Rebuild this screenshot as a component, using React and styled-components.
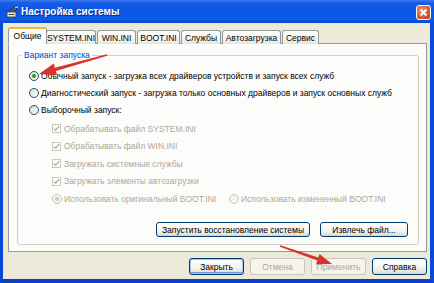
import styled, { createGlobalStyle } from "styled-components";

const GlobalStyle = createGlobalStyle`
  html, body { margin: 0; padding: 0; background: #ece9d8; }
  body { font-family: "Liberation Sans", Arial, sans-serif; }
  * { box-sizing: border-box; }
`;

const Frame = styled.div`
  position: relative;
  width: 434px;
  height: 283px;
  display: flex;
  flex-direction: column;
  overflow: hidden;
`;

const TitleBar = styled.div`
  height: 23px;
  display: flex;
  align-items: center;
  padding: 0 3px 0 6px;
  background: linear-gradient(
    to bottom,
    #3d7bf0 0%,
    #165ee6 12%,
    #0a55e4 45%,
    #0b5ae8 85%,
    #0848cc 100%
  );
`;

const TitleText = styled.span`
  flex: 1;
  margin-left: 2px;
  color: #fff;
  font-weight: bold;
  font-size: 10px;
  text-shadow: 1px 1px 0 #0a2a8a;
`;

const CloseButton = styled.div`
  width: 15px;
  height: 15px;
  border: 1px solid #fff;
  border-radius: 3px;
  background: radial-gradient(circle at 35% 30%, #f0906a, #d64f26 70%, #b8391a);
  display: flex;
  align-items: center;
  justify-content: center;
  margin-top: 2px;
`;

const Client = styled.div`
  flex: 1;
  display: flex;
  flex-direction: column;
  background: #ece9d8;
  border-left: 3px solid #0a4ad8;
  border-right: 4px solid #0a4ad8;
  border-bottom: 4px solid #0a3fc6;
  padding: 4px 3px 0 5px;
`;

const Tabs = styled.div`
  display: flex;
  align-items: flex-end;
  height: 17px;
  position: relative;
  z-index: 1;
  margin-bottom: -1px;
`;

const Tab = styled.div`
  width: ${(p) => p.$w}px;
  height: ${(p) => (p.$active ? "17px" : "14px")};
  margin-right: ${(p) => (p.$active ? "-1px" : "1px")};
  display: flex;
  align-items: center;
  justify-content: center;
  font-size: 8.5px;
  color: #000;
  border: 1px solid #919b9c;
  border-bottom: ${(p) => (p.$active ? "1px solid #fcfcfe" : "none")};
  border-top: ${(p) => (p.$active ? "2px solid #f7b43a" : "1px solid #919b9c")};
  border-radius: 3px 3px 0 0;
  background: ${(p) =>
    p.$active ? "#fcfcfe" : "linear-gradient(to bottom, #ffffff, #f3f2ec 70%, #e6e4da)"};
  white-space: nowrap;
  overflow: hidden;
`;

const Panel = styled.div`
  height: 209px;
  display: flex;
  flex-direction: column;
  border: 1px solid #919b9c;
  background: #fcfcfb;
  padding: 5px 7px 6px 8px;
`;

const Group = styled.div`
  flex: 1;
  margin-top: 6px;
  border: 1px solid #d0d0bf;
  border-radius: 3px;
  padding: 0 10px 7px 11px;
  display: flex;
  flex-direction: column;
`;

const Legend = styled.span`
  align-self: flex-start;
  margin: -6px 0 0 -7px;
  padding: 0 2px;
  background: #fcfcfb;
  color: #0046d5;
  font-size: 8.5px;
  line-height: 11px;
`;

const Row = styled.div`
  display: flex;
  align-items: center;
  height: ${(p) => (p.$tall ? "17.5px" : "17px")};
  padding-left: ${(p) => (p.$indent ? "23px" : "0")};
  font-size: 8.5px;
  color: ${(p) => (p.$disabled ? "#aca899" : "#000")};
  white-space: nowrap;
`;

const MainOptions = styled.div`
  display: flex;
  flex-direction: column;
  padding-top: 6px;
`;

const SubOptions = styled.div`
  display: flex;
  flex-direction: column;
  margin-top: 2px;
`;

const BootRow = styled.div`
  display: grid;
  grid-template-columns: 177px 1fr;
  align-items: center;
  height: 17.5px;
  padding-left: 23px;
  font-size: 8.5px;
  color: #aca899;
  white-space: nowrap;
`;

const Option = styled.span`
  display: flex;
  align-items: center;
`;

const RadioDot = styled.span`
  width: 10px;
  height: 10px;
  border-radius: 50%;
  margin-right: 2px;
  flex: none;
  border: 1px solid ${(p) => (p.$disabled ? "#cac8bb" : "#1c5180")};
  background: ${(p) =>
    p.$disabled ? "#f5f4ea" : "linear-gradient(135deg, #dcd9cf, #ffffff)"};
  display: flex;
  align-items: center;
  justify-content: center;
  &::after {
    content: "";
    display: ${(p) => (p.$checked ? "block" : "none")};
    width: 4px;
    height: 4px;
    border-radius: 50%;
    background: ${(p) => (p.$disabled ? "#cac8bb" : "#21a121")};
  }
`;

const CheckBox = styled.span`
  width: 9px;
  height: 9px;
  margin-right: 3px;
  flex: none;
  border: 1px solid #cac8bb;
  background: #fff;
  display: flex;
  align-items: center;
  justify-content: center;
`;

const ButtonRow = styled.div`
  display: flex;
  justify-content: flex-end;
  gap: 10px;
  margin-top: auto;
`;

const Button = styled.div`
  width: ${(p) => p.$w}px;
  height: ${(p) => (p.$h ? p.$h : 15)}px;
  display: flex;
  align-items: center;
  justify-content: center;
  font-size: 8.5px;
  white-space: nowrap;
  border-radius: 3px;
  border: 1px solid ${(p) => (p.$disabled ? "#c9c7ba" : "#003c74")};
  color: ${(p) => (p.$disabled ? "#aca899" : "#000")};
  background: ${(p) =>
    p.$disabled
      ? "#f5f4ea"
      : "linear-gradient(to bottom, #ffffff, #f4f3ee 60%, #e3e0d5 90%, #d6d0c5)"};
  box-shadow: ${(p) =>
    p.$default ? "inset 0 0 0 1px #a8c4ef, inset 0 -1px 0 1px #6f97e0" : "none"};
`;

const Footer = styled.div`
  display: flex;
  justify-content: flex-end;
  gap: 6px;
  padding-top: 6px;
`;

const Overlay = styled.svg`
  position: absolute;
  left: 0;
  top: 0;
  pointer-events: none;
`;

const Check = () => (
  <svg width="7" height="7" viewBox="0 0 7 7">
    <path d="M0.8 3.4 L2.7 5.3 L6.2 1.2" fill="none" stroke="#b6b4a6" strokeWidth="1.4" />
  </svg>
);

const TitleIcon = () => (
  <svg width="13" height="12" viewBox="0 0 13 12">
    <rect x="1" y="6" width="9" height="5" fill="#e8e8e8" stroke="#333" strokeWidth="0.8" />
    <path d="M3 6 L7 1.5 L11 3 L8 6" fill="#555" stroke="#222" strokeWidth="0.6" />
    <path d="M9 2 L12 0.8" stroke="#fff" strokeWidth="1" />
    <rect x="2.5" y="8" width="6" height="1" fill="#444" />
  </svg>
);

const tabs = [
  { label: "Общие", w: 39 },
  { label: "SYSTEM.INI", w: 50 },
  { label: "WIN.INI", w: 39 },
  { label: "BOOT.INI", w: 43 },
  { label: "Службы", w: 40 },
  { label: "Автозагрузка", w: 59 },
  { label: "Сервис", w: 37 },
];

const subChecks = [
  "Обрабатывать файл SYSTEM.INI",
  "Обрабатывать файл WIN.INI",
  "Загружать системные службы",
  "Загружать элементы автозагрузки",
];

export default function App() {
  return (
    <>
      <GlobalStyle />
      <Frame>
        <TitleBar>
          <TitleIcon />
          <TitleText>Настройка системы</TitleText>
          <CloseButton>
            <svg width="9" height="9" viewBox="0 0 9 9">
              <path d="M1.5 1.5 L7.5 7.5 M7.5 1.5 L1.5 7.5" stroke="#fff" strokeWidth="1.8" />
            </svg>
          </CloseButton>
        </TitleBar>
        <Client>
          <Tabs>
            {tabs.map((t, i) => (
              <Tab key={t.label} $w={t.w} $active={i === 0}>
                {t.label}
              </Tab>
            ))}
          </Tabs>
          <Panel>
            <Group>
              <Legend>Вариант запуска</Legend>
              <MainOptions>
                <Row>
                  <RadioDot $checked />
                  Обычный запуск - загрузка всех драйверов устройств и запуск всех служб
                </Row>
                <Row>
                  <RadioDot />
                  Диагностический запуск - загрузка только основных драйверов и запуск основных служб
                </Row>
                <Row>
                  <RadioDot />
                  Выборочный запуск:
                </Row>
              </MainOptions>
              <SubOptions>
                {subChecks.map((c) => (
                  <Row key={c} $indent $tall $disabled>
                    <CheckBox>
                      <Check />
                    </CheckBox>
                    {c}
                  </Row>
                ))}
                <BootRow>
                  <Option>
                    <RadioDot $checked $disabled />
                    Использовать оригинальный BOOT.INI
                  </Option>
                  <Option>
                    <RadioDot $disabled />
                    Использовать измененный BOOT.INI
                  </Option>
                </BootRow>
              </SubOptions>
              <ButtonRow>
                <Button $w={154}>Запустить восстановление системы</Button>
                <Button $w={88}>Извлечь файл...</Button>
              </ButtonRow>
            </Group>
          </Panel>
          <Footer>
            <Button $w={55} $h={17} $default>
              Закрыть
            </Button>
            <Button $w={55} $h={17} $disabled>
              Отмена
            </Button>
            <Button $w={55} $h={17} $disabled>
              Применить
            </Button>
            <Button $w={55} $h={17}>
              Справка
            </Button>
          </Footer>
        </Client>
        <Overlay width="434" height="283" viewBox="0 0 434 283">
          <polygon
            points="106.8,54.3 54.9,67.7 53.8,63.6 39,74 57,75.2 55.9,71.1 107.2,55.7"
            fill="#d8322d"
          />
          <polygon
            points="280.2,245.3 318.3,257.6 319.6,253.9 332,264 316,264.3 317.3,260.6 279.8,246.7"
            fill="#d8322d"
          />
        </Overlay>
      </Frame>
    </>
  );
}
